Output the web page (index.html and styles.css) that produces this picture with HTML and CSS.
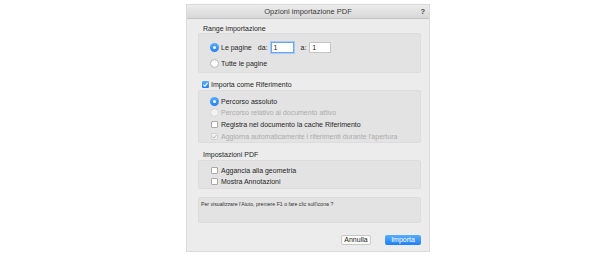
FILE: index.html
```html
<!DOCTYPE html>
<html>
<head>
<meta charset="utf-8">
<link rel="stylesheet" href="styles.css">
</head>
<body>
<div class="dialog">
  <div class="titlebar">
    <span class="title">Opzioni importazione PDF</span>
    <span class="help-q">?</span>
  </div>
  <div class="content">
    <div class="sec-label">Range importazione</div>
    <div class="box box-range">
      <div class="row row-pages">
        <span class="radio on"></span><span class="lbl">Le pagine</span>
        <span class="lbl da">da:</span><span class="input focus">1</span>
        <span class="lbl a">a:</span><span class="input">1</span>
      </div>
      <div class="row row-all">
        <span class="radio"></span><span class="lbl">Tutte le pagine</span>
      </div>
    </div>
    <div class="row check-row">
      <span class="check on"><svg viewBox="0 0 8 8" width="7" height="7"><path d="M1.6 4.2 L3.3 5.8 L6.4 2.2" fill="none" stroke="#fff" stroke-width="1.3"/></svg></span><span class="lbl">Importa come Riferimento</span>
    </div>
    <div class="box box-ref">
      <div class="row r1">
        <span class="radio on"></span><span class="lbl">Percorso assoluto</span>
      </div>
      <div class="row r2 disabled">
        <span class="radio dis"></span><span class="lbl">Percorso relativo al documento attivo</span>
      </div>
      <div class="row r3">
        <span class="check"></span><span class="lbl">Registra nel documento la cache Riferimento</span>
      </div>
      <div class="row r4 disabled">
        <span class="check dis"><svg viewBox="0 0 8 8" width="7" height="7"><path d="M1.6 4.2 L3.3 5.8 L6.4 2.2" fill="none" stroke="#b4b4b4" stroke-width="1.1"/></svg></span><span class="lbl">Aggiorna automaticamente i riferimenti durante l'apertura</span>
      </div>
    </div>
    <div class="sec-label sec-pdf">Impostazioni PDF</div>
    <div class="box box-pdf">
      <div class="row p1">
        <span class="check"></span><span class="lbl">Aggancia alla geometria</span>
      </div>
      <div class="row p2">
        <span class="check"></span><span class="lbl">Mostra Annotazioni</span>
      </div>
    </div>
    <div class="box help-box">Per visualizzare l'Aiuto, premere F1 o fare clic sull'icona ?</div>
    <div class="buttons">
      <span class="btn cancel">Annulla</span>
      <span class="btn primary">Importa</span>
    </div>
  </div>
</div>
</body>
</html>
```

FILE: styles.css
```css
html, body {
  margin: 0;
  padding: 0;
  background: #ffffff;
}
body {
  width: 599px;
  height: 259px;
  overflow: hidden;
  font-family: "Liberation Sans", Arial, sans-serif;
  color: #262626;
}
.dialog {
  margin: 5px 0 0 187px;
  width: 242px;
  height: 246px;
  background: #ececec;
  box-shadow: 0 0 0 1px #dadada;
  box-sizing: border-box;
  display: flex;
  flex-direction: column;
}
.titlebar {
  height: 14px;
  box-sizing: border-box;
  background: linear-gradient(#ececec, #d8d8d8);
  border-bottom: 1px solid #c4c4c4;
  display: flex;
  align-items: center;
  justify-content: center;
  position: relative;
}
.title {
  font-size: 7.5px;
  color: #3a3a3a;
}
.help-q {
  position: absolute;
  right: 4px;
  top: 2px;
  font-size: 7.5px;
  font-weight: bold;
  color: #444;
}
.content {
  padding: 0 8px 0 11px;
  display: flex;
  flex-direction: column;
}
.sec-label {
  margin-top: 6px;
  height: 8px;
  line-height: 8px;
  font-size: 7px;
  padding-left: 5px;
}
.box {
  background: #e3e3e3;
  border: 1px solid #dcdcdc;
  border-radius: 2px;
  box-sizing: border-box;
}
.row {
  display: flex;
  align-items: center;
  height: 10px;
  font-size: 7px;
}
.lbl {
  white-space: nowrap;
}
.radio {
  width: 9px;
  height: 9px;
  border-radius: 50%;
  box-sizing: border-box;
  border: 1px solid #b5b5b5;
  background: #fff;
  margin-right: 2px;
  position: relative;
  flex: none;
}
.radio.on {
  border: none;
  background: linear-gradient(#5aaeff, #2281f5);
}
.radio.on::after {
  content: "";
  position: absolute;
  left: 3px;
  top: 3px;
  width: 3px;
  height: 3px;
  border-radius: 50%;
  background: #fff;
}
.radio.dis {
  border-color: #d6d6d6;
  background: #f2f2f2;
}
.check {
  width: 7px;
  height: 7px;
  box-sizing: border-box;
  border: 1px solid #a9a9a9;
  border-radius: 1px;
  background: #fff;
  margin-right: 2px;
  flex: none;
  display: flex;
  align-items: center;
  justify-content: center;
  overflow: hidden;
}
.check svg { display: block; flex: none; }
.check.on {
  border: none;
  background: linear-gradient(#5aaeff, #2281f5);
}
.check.dis {
  border-color: #d2d2d2;
  background: #f1f1f1;
}
.disabled .lbl {
  color: #ababab;
}
/* Range box */
.box-range {
  height: 40px;
  padding: 7px 0 0 11px;
}
.row-pages {
  height: 12px;
}
.row-pages .da { margin-left: 6px; margin-right: 3px; }
.row-pages .a { margin-left: 7px; margin-right: 3px; }
.input {
  height: 11px;
  box-sizing: border-box;
  background: #fff;
  border: 1px solid #c4c4c4;
  font-size: 7px;
  line-height: 9px;
  padding-left: 2px;
  width: 22px;
}
.input.focus {
  width: 23px;
  border: 1px solid #6aa7ec;
  box-shadow: 0 0 0 1px #a9cbf3;
}
.row-all {
  margin-top: 5px;
}
/* reference check */
.check-row {
  margin-top: 6px;
  padding-left: 4px;
}
.box-ref {
  margin-top: 1px;
  height: 53px;
  padding: 5px 0 0 11px;
}
.box-ref .r2 { margin-top: 1px; }
.box-ref .r3 { margin-top: 2px; padding-left: 1px; }
.box-ref .r4 { margin-top: 2px; padding-left: 1px; }
.box-ref .r3 .check, .box-ref .r4 .check { margin-right: 3px; }
.sec-pdf {
  margin-top: 8px;
}
.box-pdf {
  margin-top: 1px;
  height: 29px;
  padding: 4px 0 0 12px;
}
.box-pdf .row .check { margin-right: 3px; }
.box-pdf .p2 { margin-top: 1px; }
.help-box {
  margin-top: 8px;
  height: 26px;
  font-size: 5.2px;
  padding: 3px 0 0 2px;
  color: #333;
  white-space: nowrap;
}
.buttons {
  margin-top: 12px;
  display: flex;
  justify-content: flex-end;
  gap: 14px;
}
.btn {
  height: 10px;
  box-sizing: border-box;
  font-size: 7px;
  line-height: 10px;
  text-align: center;
  border-radius: 2px;
}
.btn.cancel {
  width: 30px;
  background: #fff;
  border: 1px solid #c8c8c8;
  line-height: 8px;
  color: #222;
}
.btn.primary {
  width: 36px;
  background: linear-gradient(#5aaeff, #1f7ef6);
  color: #fff;
}
```
